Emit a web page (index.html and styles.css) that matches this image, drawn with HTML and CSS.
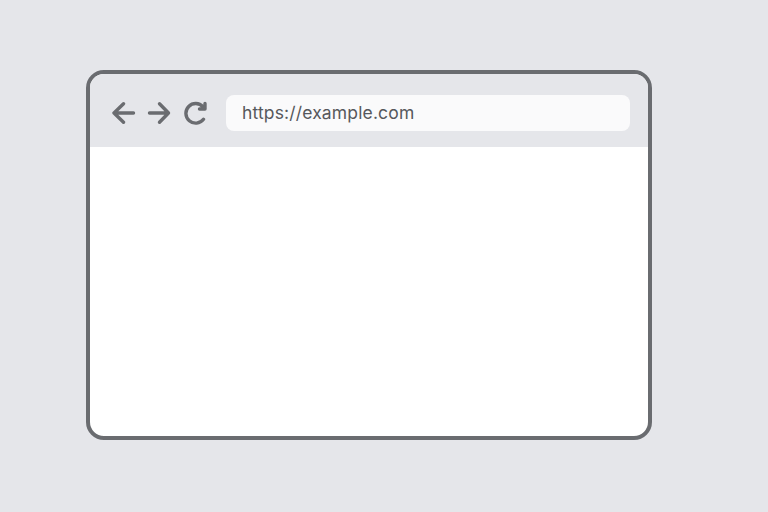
FILE: index.html
```html
<!DOCTYPE html>
<html>
<head>
<meta charset="utf-8" />
<title>Browser window</title>
	<link rel="stylesheet" href="styles.css">
</head>

<body>
	<div class="window">
		<div class="toolbar">
			<div class="nav">
				<svg class="icon" width="25" height="24" viewBox="0 0 25 24">
					<path d="M21.500 12H2M11.500 2.700L2 12l9.500 9.300" />
				</svg>
				<svg class="icon" width="25" height="24" viewBox="0 0 25 24">
					<path d="M2.500 12h19M12.500 2.700L21.500 12l-9 9.300" />
				</svg>
				<svg class="icon" width="25" height="24" viewBox="0 0 25 24">
					<path d="M21.500 18.300A9.800 9.800 0 1 1 21 5.800M23 2.500V8H17.500" />
				</svg>
			</div>
			<div class="address">https://example.com</div>
		</div>
		<div class="content"></div>
	</div>
</body>
</html>
```

FILE: styles.css
```css
html, body {
	height: 100%;
}
body {
	margin: 0;
	padding: 70px 116px 0 86px;
	box-sizing: border-box;
	background-color: #e5e6ea;
	font: normal 17.500px "Inter", "Liberation Sans", sans-serif;
	letter-spacing: 0.150px;
	color: #56585c;
}
.window {
	height: 370px;
	display: flex;
	flex-direction: column;
	box-sizing: border-box;
	border: 4px solid #6a6c70;
	border-radius: 18px;
	overflow: hidden;
	background-color: #fff;
}
.toolbar {
	height: 73px;
	display: flex;
	align-items: center;
	gap: 19px;
	padding: 4px 18px 0 22px;
	box-sizing: border-box;
	background-color: #e5e6ea;
}
.nav {
	display: flex;
	gap: 10px;
}
.icon {
	fill: none;
	stroke: #6a6c70;
	stroke-width: 3.400;
	stroke-linecap: round;
	stroke-linejoin: round;
}
.address {
	flex: 1;
	height: 36px;
	line-height: 36px;
	padding-left: 16px;
	border-radius: 8px;
	background-color: #fafafb;
}
.content {
	flex: 1;
}
```
